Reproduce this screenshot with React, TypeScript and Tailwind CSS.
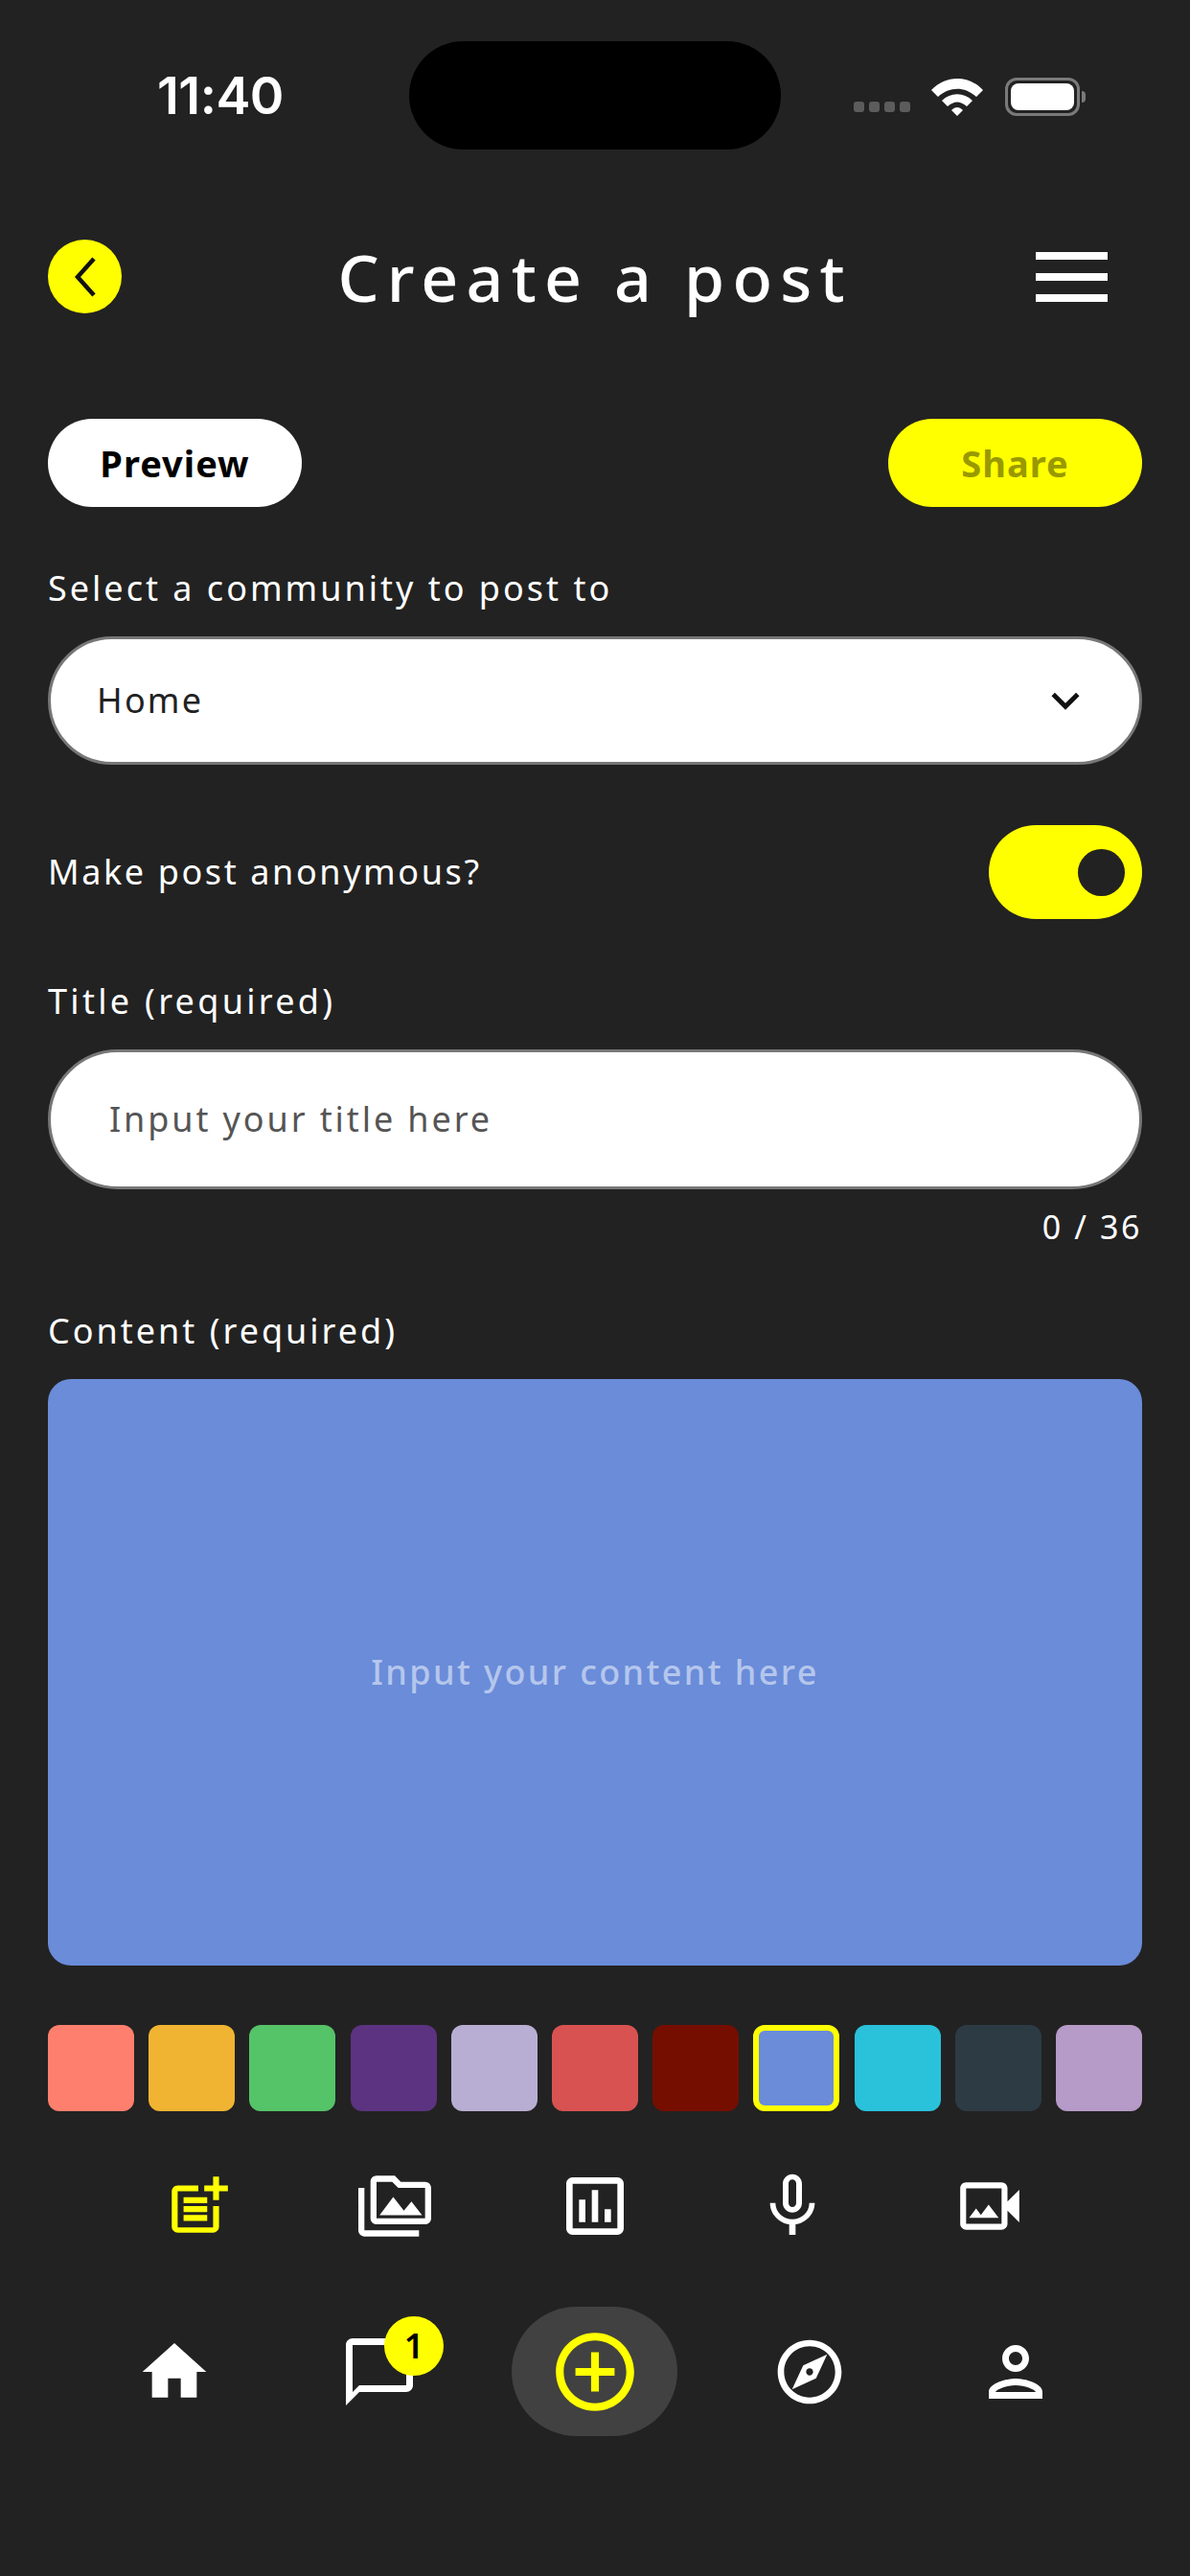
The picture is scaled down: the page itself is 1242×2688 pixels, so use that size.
import {
  MdHome,
  MdMicNone,
  MdOutlineAddCircleOutline,
  MdOutlineChatBubbleOutline,
  MdOutlineExplore,
  MdOutlineKeyboardArrowDown,
  MdOutlinePerson,
  MdOutlinePermMedia,
  MdOutlinePoll,
  MdOutlinePostAdd,
  MdOutlineVideoCameraBack,
} from 'react-icons/md'

const swatches = [
  { color: 'bg-[#ff7f6e]' },
  { color: 'bg-[#f0b432]' },
  { color: 'bg-[#55c368]' },
  { color: 'bg-[#5c3380]' },
  { color: 'bg-[#b8aed3]' },
  { color: 'bg-[#d95252]' },
  { color: 'bg-[#760e00]' },
  { color: 'bg-[#6a8cd9] border-[6px] border-[#ffff00]' },
  { color: 'bg-[#2ac1db]' },
  { color: 'bg-[#2d3b45]' },
  { color: 'bg-[#b69ac7]' },
]

function StatusBar() {
  return (
    <div className="flex h-[156px] items-start pt-[43px]">
      <div className="w-[427px] pt-[29px] pl-[164px] font-['Inter',sans-serif] text-[54px] leading-[56px] font-semibold tracking-[-0.5px] text-white">
        11:40
      </div>
      <div className="h-[113px] w-[388px] rounded-full bg-black" />
      <div className="flex flex-1 items-center pt-[38px] pl-[76px]">
        <div className="mt-[20px] flex gap-[5px]">
          <span className="h-[11px] w-[11px] rounded-[3px] bg-[#5c5c5c]" />
          <span className="h-[11px] w-[11px] rounded-[3px] bg-[#5c5c5c]" />
          <span className="h-[11px] w-[11px] rounded-[3px] bg-[#5c5c5c]" />
          <span className="h-[11px] w-[11px] rounded-[3px] bg-[#5c5c5c]" />
        </div>
        <svg width="54" height="40" viewBox="0 0 54 40" className="ml-[22px]">
          <path d="M0 13 C15 -3 39 -3 54 13 L47 20 C35 9 19 9 7 20 Z" fill="#fff" />
          <path d="M11 24 C20 15 34 15 43 24 L37 30 C30 24 24 24 17 30 Z" fill="#fff" />
          <path d="M21 34 C25 30 29 30 33 34 L27 40 Z" fill="#fff" />
        </svg>
        <div className="ml-[23px] flex items-center">
          <div className="h-[40px] w-[78px] rounded-[12px] border-[3px] border-[#7a7a7a] p-[3px]">
            <div className="h-full w-full rounded-[8px] bg-white" />
          </div>
          <div className="ml-[2px] h-[12px] w-[4px] rounded-r-full bg-[#7a7a7a]" />
        </div>
      </div>
    </div>
  )
}

function Header() {
  return (
    <div className="mt-[94px] flex h-[77px] items-center px-[50px]">
      <div className="w-[111px]">
        <div className="flex h-[77px] w-[77px] items-center justify-center rounded-full bg-[#ffff00]">
          <svg width="30" height="44" viewBox="0 0 30 44" fill="none" stroke="#111" strokeWidth="4.5">
            <path d="M24 3 L7 22 L24 41" />
          </svg>
        </div>
      </div>
      <div className="flex-1 text-center text-[68px] leading-[77px] font-medium tracking-[8.2px] text-white">
        Create a post
      </div>
      <div className="flex w-[111px] flex-col gap-[14px] pr-[36px]">
        <span className="h-[8px] bg-white" />
        <span className="h-[8px] bg-white" />
        <span className="h-[8px] bg-white" />
      </div>
    </div>
  )
}

function BottomNav() {
  return (
    <div className="mt-[63px] flex h-[135px] items-center pl-[150px]">
      <div className="w-[100px] shrink-0">
        <MdHome size={80} color="#fff" className="-ml-[8px]" />
      </div>
      <div className="relative ml-[110px] w-[72px] shrink-0">
        <MdOutlineChatBubbleOutline size={84} color="#fff" className="-ml-[6px]" />
        <div className="absolute -top-[16px] left-[41px] flex h-[62px] w-[62px] items-center justify-center rounded-full bg-[#ffff00] text-[36px] font-semibold text-black">
          1
        </div>
      </div>
      <div className="ml-[102px] flex h-[135px] w-[173px] shrink-0 items-center justify-center rounded-full bg-[#414141]">
        <MdOutlineAddCircleOutline size={98} color="#ffff00" />
      </div>
      <div className="ml-[98px] shrink-0">
        <MdOutlineExplore size={80} color="#fff" />
      </div>
      <div className="ml-[133px] shrink-0">
        <MdOutlinePerson size={84} color="#fff" />
      </div>
    </div>
  )
}

export default function App() {
  return (
    <div className="h-[2688px] w-[1242px] overflow-hidden bg-[#222222] font-['Noto_Sans',sans-serif] text-white">
      <StatusBar />
      <Header />

      <div className="px-[50px]">
        <div className="mt-[110px] flex justify-between">
          <div className="flex h-[92px] w-[265px] items-center justify-center rounded-full bg-white text-[38px] font-bold tracking-[1px] text-black">
            Preview
          </div>
          <div className="flex h-[92px] w-[265px] items-center justify-center rounded-full bg-[#ffff00] text-[38px] font-bold tracking-[1px] text-[#999900]">
            Share
          </div>
        </div>

        <div className="mt-[60px] text-[36px] leading-[50px] tracking-[3px]">Select a community to post to</div>
        <div className="mt-[25px] flex h-[134px] items-center justify-between rounded-full border-[3px] border-[#777] bg-white pr-[48px] pl-[48px]">
          <span className="text-[36px] tracking-[2.2px] text-[#222]">Home</span>
          <MdOutlineKeyboardArrowDown size={58} color="#111" />
        </div>

        <div className="mt-[63px] flex items-center justify-between">
          <span className="text-[36px] tracking-[2.6px]">Make post anonymous?</span>
          <div className="flex h-[98px] w-[160px] items-center justify-end rounded-full bg-[#ffff00] pr-[18px]">
            <div className="h-[49px] w-[49px] rounded-full bg-[#222222]" />
          </div>
        </div>

        <div className="mt-[61px] text-[36px] leading-[50px] tracking-[3.3px]">Title (required)</div>
        <div className="mt-[25px] flex h-[146px] items-center rounded-full border-[3px] border-[#777] bg-white pl-[61px]">
          <span className="text-[36px] tracking-[2.9px] text-[#555]">Input your title here</span>
        </div>
        <div className="mt-[14px] text-right text-[34px] leading-[50px] tracking-[2.6px]">0 / 36</div>

        <div className="mt-[59px] text-[36px] leading-[50px] tracking-[3px]">Content (required)</div>
        <div className="mt-[25px] flex h-[612px] items-center justify-center rounded-[24px] bg-[#6a8cd9]">
          <span className="text-[36px] font-medium tracking-[2.4px] text-[#b5c6ec]">Input your content here</span>
        </div>

        <div className="mt-[62px] flex justify-between">
          {swatches.map((s) => (
            <div key={s.color} className={`h-[90px] w-[90px] rounded-[12px] ${s.color}`} />
          ))}
        </div>

        <div className="mt-[57px] flex h-[84px] items-center pl-[120px]">
          <MdOutlinePostAdd size={74} color="#ffff00" />
          <MdOutlinePermMedia size={76} color="#fff" className="ml-[130px]" />
          <MdOutlinePoll size={80} color="#fff" className="ml-[131px]" />
          <MdMicNone size={80} color="#fff" className="ml-[126px]" />
          <MdOutlineVideoCameraBack size={74} color="#fff" className="ml-[129px]" />
        </div>
      </div>

      <BottomNav />
    </div>
  )
}
